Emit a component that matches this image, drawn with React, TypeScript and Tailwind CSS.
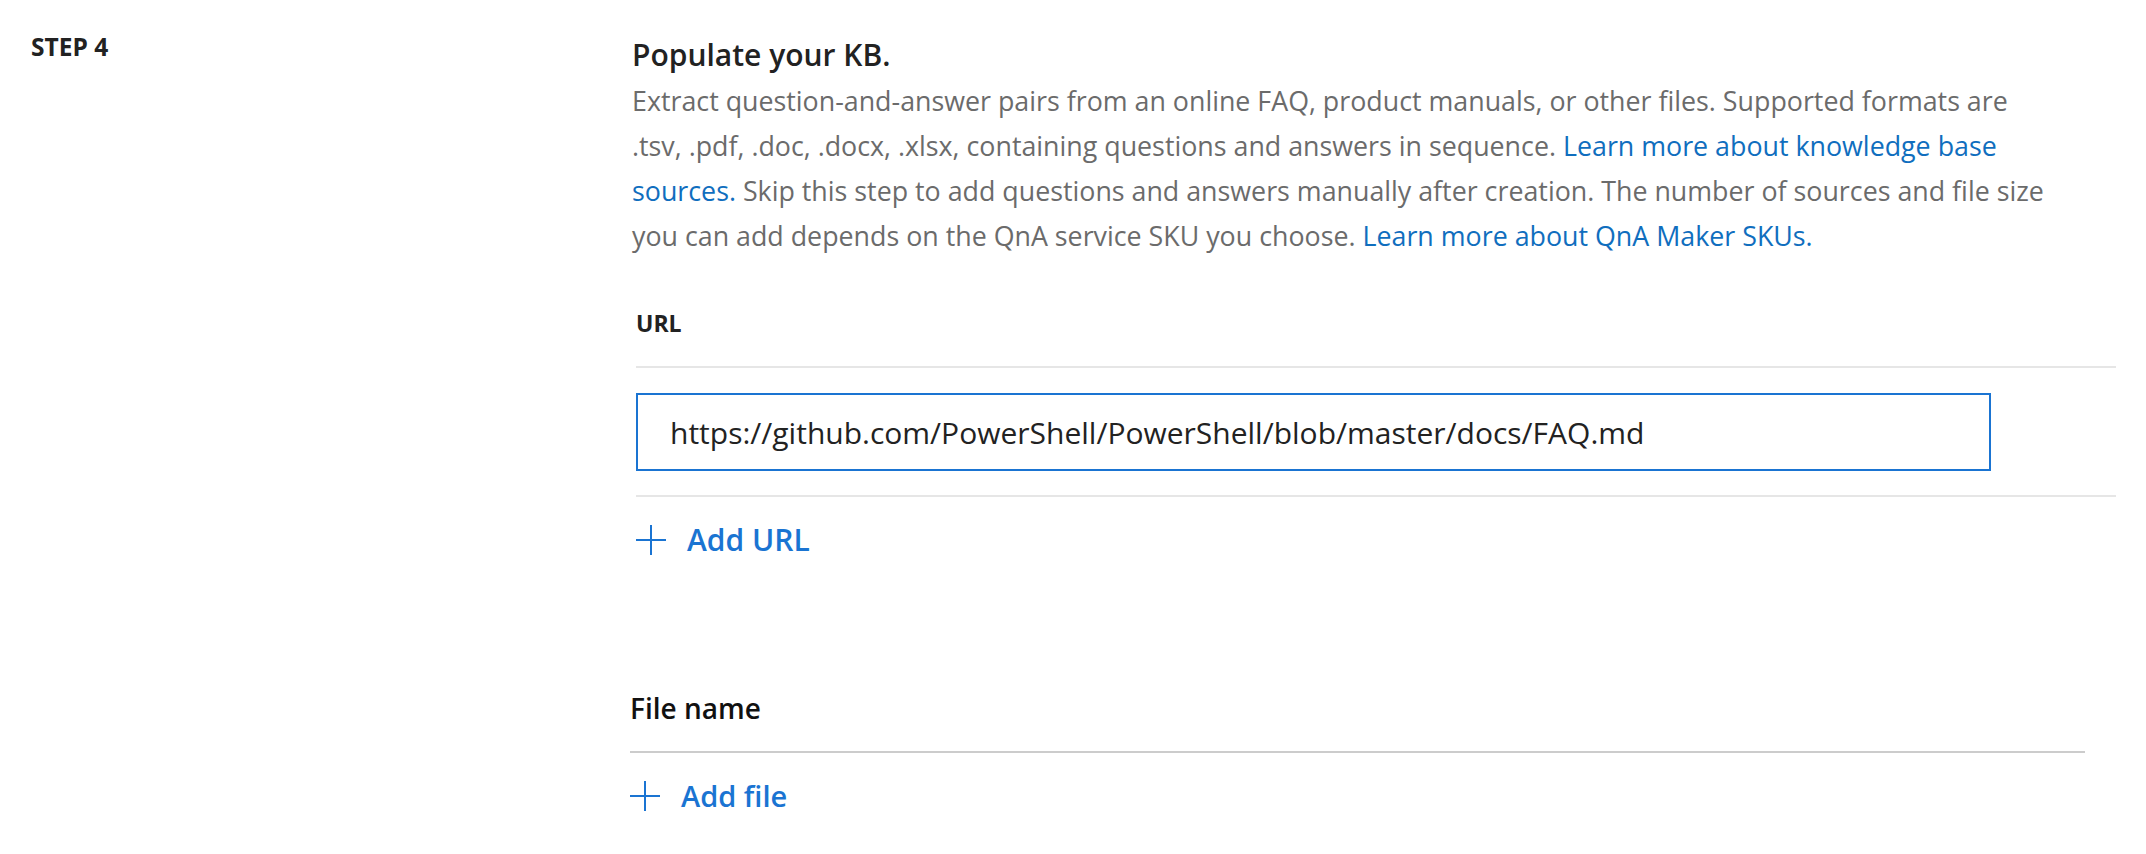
import React from 'react';

const font = { fontFamily: '"Open Sans", "Noto Sans", Arial, sans-serif' };

function PlusIcon() {
  return (
    <svg width="30" height="30" viewBox="0 0 30 30" className="shrink-0">
      <line x1="15" y1="0" x2="15" y2="30" stroke="#1a74d2" strokeWidth="2" />
      <line x1="0" y1="15" x2="30" y2="15" stroke="#1a74d2" strokeWidth="2" />
    </svg>
  );
}

function AddButton({ label, size }: { label: string; size: string }) {
  return (
    <button className={`flex items-center gap-[21px] text-[#1a74d2] leading-[30px] font-semibold ${size}`}>
      <PlusIcon />
      <span>{label}</span>
    </button>
  );
}

export default function App() {
  return (
    <div className="flex min-h-[854px] w-[2146px] bg-white" style={font}>
      <div className="w-[630px] shrink-0 pl-[31px] pt-[32px]">
        <div className="text-[24.5px] leading-[30px] font-bold text-[#222]">STEP 4</div>
      </div>

      <div className="flex-1 pt-[35px] pr-[30px]">
        <h2 className="ml-[2px] text-[30px] leading-[40px] font-semibold text-[#222]">Populate your KB.</h2>
        <p className="ml-[2px] mt-[3px] text-[26.8px] leading-[45px] text-[#6b6b6b] whitespace-nowrap">
          Extract question-and-answer pairs from an online FAQ, product manuals, or other files. Supported formats are
          <br />
          .tsv, .pdf, .doc, .docx, .xlsx, containing questions and answers in sequence.{' '}
          <a className="text-[#106ebe]">Learn more about knowledge base</a>
          <br />
          <a className="text-[#106ebe]">sources.</a> Skip this step to add questions and answers manually after creation. The number of sources and file size
          <br />
          you can add depends on the QnA service SKU you choose.{' '}
          <a className="text-[#106ebe]">Learn more about QnA Maker SKUs.</a>
        </p>

        <div className="ml-[6px] w-[1480px]">
          <div className="mt-[50px] text-[23px] leading-[30px] font-bold text-[#222]">URL</div>
          <div className="mt-[28px] h-[2px] bg-[#e6e6e6]" />
          <div className="mt-[25px] flex h-[78px] w-[1355px] items-center border-2 border-[#1a74d2] pl-[32px] text-[30px] text-[#222]">
            https://github.com/PowerShell/PowerShell/blob/master/docs/FAQ.md
          </div>
          <div className="mt-[24px] h-[2px] bg-[#e6e6e6]" />
          <div className="mt-[28px]">
            <AddButton label="Add URL" size="text-[30px]" />
          </div>
        </div>

        <div className="w-[1455px]">
          <div className="mt-[135px] text-[28px] leading-[36px] font-semibold text-[#111]">File name</div>
          <div className="mt-[25px] h-[2px] bg-[#cccccc]" />
          <div className="mt-[28px]">
            <AddButton label="Add file" size="text-[29px]" />
          </div>
        </div>
      </div>
    </div>
  );
}
